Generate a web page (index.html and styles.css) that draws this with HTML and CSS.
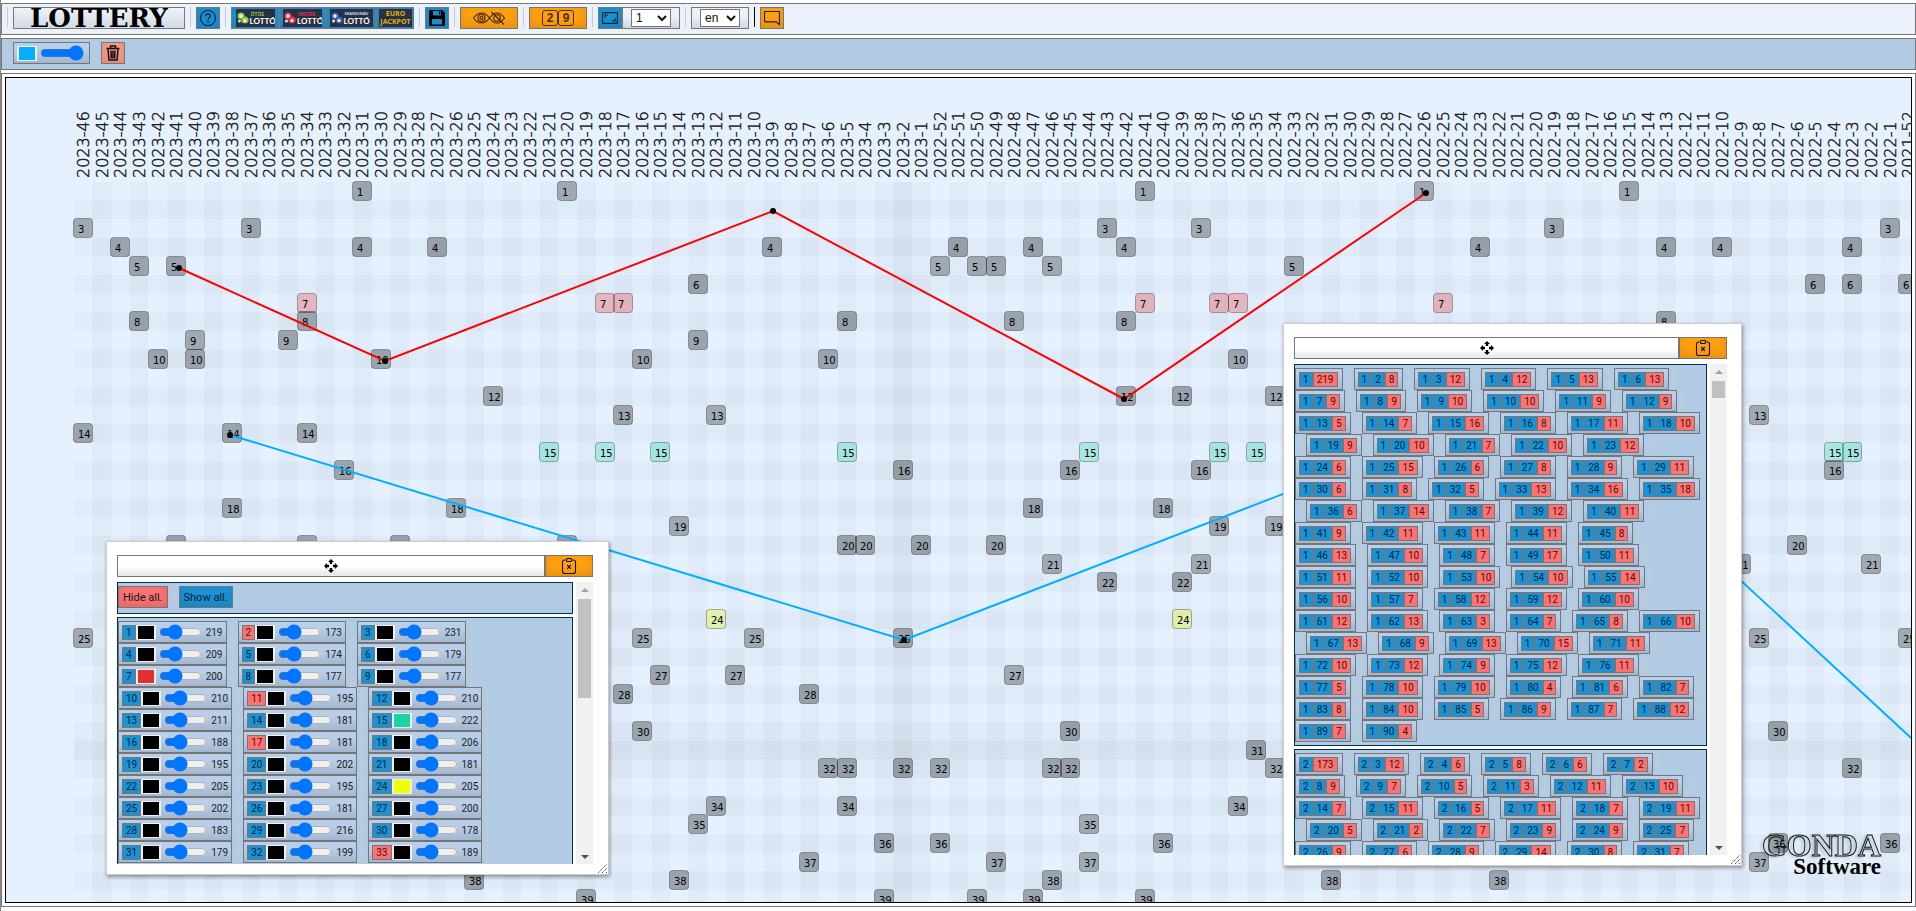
FILE: index.html
```html
<!DOCTYPE html>
<html lang="en">
<head>
<meta charset="utf-8">
<title>Lottery</title>
<link rel="stylesheet" href="styles.css">
</head>
<body>
<svg class="defs" aria-hidden="true">
  <symbol id="move" viewBox="0 0 14 14">
    <path d="M7 0 10 3H8.200V5H5.800V3H4zM7 14 4 11h1.800V9h2.400v2H10zM0 7l3-3v1.800H5v2.400H3V10zM14 7l-3 3V8.200H9V5.800h2V4z"/>
  </symbol>
  <symbol id="clip" viewBox="0 0 16 16">
    <path d="M4.500 2H3.500a2 2 0 0 0-2 2v9.500a2 2 0 0 0 2 2h9a2 2 0 0 0 2-2V4a2 2 0 0 0-2-2h-1M6.500.5h3a1 1 0 0 1 1 1v1a1 1 0 0 1-1 1h-3a1 1 0 0 1-1-1v-1a1 1 0 0 1 1-1zM6.200 7l3.600 3.800M9.800 7l-3.600 3.800" fill="none" stroke="#111" stroke-width="1.100"/>
  </symbol>
  <symbol id="balls" viewBox="0 0 12 12">
    <circle cx="4" cy="4" r="3.600"/><circle cx="8" cy="8" r="3.600"/>
    <circle cx="4" cy="4" r="1.700" fill="#fff"/><circle cx="8" cy="8.500" r="1.500" fill="#fff"/><circle cx="2.500" cy="9" r="1.500" fill="#e8e8c0"/>
  </symbol>
  <symbol id="grip" viewBox="0 0 9 9">
    <path d="M0 9 9 0M4 9l5-5M8 9l1-1" stroke="#555" stroke-width="1" stroke-dasharray="1.500 .6"/>
  </symbol>
</svg>

<header class="bar bar-main">
  <i class="sep"></i>
  <h1 class="logo">LOTTERY</h1>
  <i class="sep"></i>
  <button class="btn blue" aria-label="Help">
    <svg width="18" height="18" viewBox="0 0 18 18"><circle cx="9" cy="9" r="7.500" fill="none" stroke="#06263a" stroke-width="1.200"/><path d="M6.700 7.200C6.700 5.600 7.700 4.900 9 4.900s2.300.8 2.300 2c0 1.600-2.200 1.700-2.200 3.600" fill="none" stroke="#06263a" stroke-width="1.300"/><circle cx="9.100" cy="12.600" r=".9" fill="#06263a"/></svg>
  </button>
  <i class="sep"></i>
  <div class="group">
    <button class="btn blue game"><span class="card"><svg class="green" width="12" height="12"><use href="#balls"/></svg><span class="name"><small class="green">ÖTÖS</small><b>LOTTÓ</b></span></span></button>
    <button class="btn blue game"><span class="card"><svg class="red" width="12" height="12"><use href="#balls"/></svg><span class="name"><small class="red">HATOS</small><b>LOTTÓ</b></span></span></button>
    <button class="btn blue game"><span class="card card-wide"><svg class="navy" width="12" height="12"><use href="#balls"/></svg><span class="name"><small class="sky">SKANDINÁV</small><b>LOTTÓ</b></span></span></button>
    <button class="btn blue game"><span class="card card-slim"><span class="name gold"><em>EURO</em><em>JACKPOT</em></span></span></button>
  </div>
  <i class="sep"></i>
  <button class="btn blue" aria-label="Save">
    <svg width="16" height="16" viewBox="0 0 16 16"><path d="M1.500 0H13l3 2.500V14.500a1.500 1.500 0 0 1-1.500 1.500h-13A1.500 1.500 0 0 1 0 14.500v-13A1.500 1.500 0 0 1 1.500 0z"/><path d="M4 1h8v4.500H4zM3 9h10v5.500H3z" fill="#198ccb"/><path d="M10 1.500h1.300V4.500H10z"/></svg>
  </button>
  <i class="sep"></i>
  <button class="btn orange wide" aria-label="Toggle visibility">
    <svg width="32" height="14" viewBox="0 0 32 14" fill="none" stroke="#3a2500" stroke-width="1.100"><path d="M.5 7C3 3.500 5.500 2 8.500 2S14 3.500 16.500 7C14 10.500 11.500 12 8.500 12S3 10.500.5 7z"/><circle cx="8.500" cy="7" r="3.500"/><circle cx="8.500" cy="7" r="1.500"/><path d="M16.500 7C19 3.500 21 2 24 2s5 1.500 7.500 5C29 10.500 27 12 24 12s-5-1.500-7.500-5z"/><circle cx="24" cy="7" r="3.200"/><path d="M18.500 1 31 13.500"/></svg>
  </button>
  <i class="sep"></i>
  <button class="btn orange wide"><span class="digit">2</span><span class="digit">9</span></button>
  <i class="sep"></i>
  <div class="group">
    <button class="btn blue" aria-label="Zoom">
      <svg width="16" height="12" viewBox="0 0 16 12" fill="none" stroke="#04202f" stroke-width="1.100"><rect x=".6" y=".6" width="14.800" height="10.800" rx="1"/><path d="M3 5.500V3h3M13 6.500V9h-3"/></svg>
    </button>
    <span class="field"><select aria-label="Zoom level"><option>1</option></select></span>
  </div>
  <i class="sep"></i>
  <span class="field"><select aria-label="Language"><option>en</option></select></span>
  <i class="sep dark"></i>
  <button class="btn orange" aria-label="Comment">
    <svg width="16" height="16" viewBox="0 0 16 16" fill="none" stroke="#222" stroke-width="1.200"><path d="M1.500 1.500h13a1 1 0 0 1 1 1V14.500L12 11.800H1.500a1 1 0 0 1-1-1V2.500a1 1 0 0 1 1-1z"/></svg>
  </button>
</header>

<div class="bar bar-tools">
  <i class="sep"></i>
  <span class="item pen"><input type="color" value="#00b0ff" aria-label="Line colour"><input type="range" value="100" aria-label="Line opacity"></span>
  <i class="sep"></i>
  <button class="btn salmon" aria-label="Delete">
    <svg width="14" height="16" viewBox="0 0 14 16" fill="none" stroke="#111" stroke-width="1.500"><path d="M.5 3.500h13M4.500 3V1h5v2M2 4l1 11h8l1-11M5 5.500l.4 8M7 5.500v8M9 5.500l-.4 8"/></svg>
  </button>
</div>

<main class="stage">
  <div class="board">
    <svg id="chart" class="chart" role="img" aria-label="Drawn numbers by week"></svg>

    <section class="window window-numbers">
      <div class="titlebar"><button class="drag" aria-label="Move"><svg width="14" height="14"><use href="#move"/></svg></button><button class="btn orange close" aria-label="Close"><svg width="16" height="16"><use href="#clip"/></svg></button></div>
      <div class="body">
        <div class="content">
          <div class="box box-actions"><button class="btn coral text">Hide all.</button><i class="sep"></i><button class="btn blue text">Show all.</button></div>
          <div class="box" id="numbers"></div>
        </div>
        <div class="scroll"><i class="up"></i><i class="thumb thumb-long"></i><i class="down"></i></div>
      </div>
      <svg class="grip" width="9" height="9"><use href="#grip"/></svg>
    </section>

    <section class="window window-pairs">
      <div class="titlebar"><button class="drag" aria-label="Move"><svg width="14" height="14"><use href="#move"/></svg></button><button class="btn orange close" aria-label="Close"><svg width="16" height="16"><use href="#clip"/></svg></button></div>
      <div class="body">
        <div class="content" id="pairs"></div>
        <div class="scroll"><i class="up"></i><i class="thumb"></i><i class="down"></i></div>
      </div>
      <svg class="grip" width="9" height="9"><use href="#grip"/></svg>
    </section>

    <div class="brand"><span class="brand-top">GONDA</span><span class="brand-bottom">Software</span></div>
  </div>
</main>
<script src="app.js"></script>
</body>
</html>
```
FILE: styles.css
```css
* { box-sizing: border-box; }
body {
  margin: 0;
  height: 100vh;
  padding: 3px 0 4px;
  display: flex;
  flex-direction: column;
  gap: 3px;
  background: #fff;
  border-left: 1px solid #888;
  font-family: Roboto, "Liberation Sans", sans-serif;
  font-size: 10px;
  overflow: hidden;
}
.defs { position: absolute; width: 0; height: 0; }
button { font: inherit; margin: 0; padding: 0; cursor: pointer; }

.bar {
  display: flex;
  align-items: flex-start;
  height: 32px;
  flex: none;
  padding: 3px 0 5px;
  border: 1px solid #767676;
  background: #ebf1fa;
}
.bar-tools { background: #b1cbe5; }
.sep { flex: none; width: 1px; height: 20px; margin: 0 5px; background: #c8cacc; }
.sep.dark { background: #000; }
.group { display: flex; }

.btn {
  display: inline-flex;
  align-items: center;
  justify-content: center;
  flex: none;
  width: 24px;
  height: 22px;
  border: 1px solid #767676;
  box-shadow: inset 0 -4px 8px rgba(0, 0, 0, .1);
  color: #0a1c2a;
}
.blue { background: #1a92d4; }
.orange { background: #ffa010; }
.salmon { background: #fa9a84; }
.coral { background: #ff7272; }
.wide { width: 58px; }
.text { width: auto; padding: 0 4px; font-size: 11px; }

.logo {
  margin: 0;
  width: 172px;
  height: 22px;
  border: 1px solid #767676;
  background: linear-gradient(#eef3fb, #d5dae2);
  color: #000;
  font: bold 26px/20px "DejaVu Serif", serif;
  text-align: center;
}
.game { width: 48px; }
.game + .game { width: 47px; }
.game:nth-child(3) { width: 50px; }
.game:nth-child(4) { width: 38px; }
.card {
  display: flex;
  align-items: center;
  gap: 1px;
  width: 39px;
  height: 18px;
  overflow: hidden;
  background: #2a3044;
  padding-left: 1px;
}
.card-wide { width: 43px; }
.card-slim { width: 33px; justify-content: center; }
.card svg { flex: none; fill: currentColor; }
.name { display: flex; flex-direction: column; text-align: left; color: #fff; }
.card svg.green, small.green { color: #8fc640; background: none; }
.card svg.red, small.red { color: #ee3050; }
.card svg.navy { color: #3c64b8; }
small.sky { color: #c8d8f0; }
.name small { font: bold 5px/6px "Open Sans", sans-serif; padding-left: 1px; }
.card-wide small { font-size: 4px; }
.name b { font: bold 8px/8px Lato, sans-serif; }
.name.gold { color: #e0b400; align-items: center; }
.name em { font: bold 7px/8px "Open Sans", sans-serif; }

.digit {
  width: 16px;
  height: 16px;
  border: 1px solid #4a3000;
  border-radius: 3px;
  font: bold 12px/14px "Liberation Sans", sans-serif;
  color: #4a3000;
}
.field {
  display: flex;
  justify-content: center;
  width: 58px;
  height: 22px;
  padding-top: 1px;
  border: 1px solid #767676;
  background: linear-gradient(#ebf1fa 40%, #cfd4dd);
}
select {
  width: 40px;
  height: 18px;
  padding: 0;
  border: 1px solid #767676;
  border-radius: 0;
  background: #fff;
  color: #111;
  font: 12px "Liberation Sans", sans-serif;
}

.item {
  display: flex;
  align-items: center;
  flex: none;
  height: 22px;
  padding: 0 3px;
  border: 1px solid #767676;
  background: linear-gradient(#b9cee8 30%, #a3b7d0);
}
input[type="color"] {
  appearance: none;
  flex: none;
  width: 20px;
  height: 15px;
  padding: 0;
  border: solid #efefef;
  border-width: 1px 2px;
  background: #efefef;
}
input[type="color"]::-webkit-color-swatch-wrapper { padding: 0; }
input[type="color"]::-webkit-color-swatch { border: 0; border-radius: 0; }
input[type="range"] { flex: none; width: 43px; height: 16px; margin: 0 4px 0 3px; }
.pen input[type="range"] { width: 44px; margin: 0 2px 0 3px; }

.stage {
  flex: 1;
  min-height: 0;
  padding: 3px;
  border: 1px solid #767676;
}
.board {
  position: relative;
  height: 100%;
  border: 1px solid #000;
  background: #e5f1ff;
  overflow: hidden;
}
.chart { display: block; width: 100%; height: 100%; }
.chart text { font-family: "DejaVu Sans", sans-serif; }
.week { font-size: 16px; font-weight: 200; fill: #111; stroke: #111; stroke-width: .4; }
.num { font-size: 10px; fill: #000; }
.stripe { fill: #000; opacity: .025; }
.cursor { fill: #000; opacity: .05; }
.cell { fill: #000; fill-opacity: .3; stroke: #000; stroke-opacity: .3; }
.cell.c7 { fill: #e53030; }
.cell.c15 { fill: #1cd3a2; }
.cell.c24 { fill: #eeff00; }
.path { fill: none; stroke-width: 2; }

.window {
  position: absolute;
  display: flex;
  flex-direction: column;
  gap: 5px;
  padding: 13px 15px 10px 10px;
  border: 1px solid #ccc;
  background: #fff;
  box-shadow: 1px 2px 4px rgba(0, 0, 0, .4);
}
.window-numbers { left: 100px; top: 463px; width: 503px; height: 334px; }
.window-pairs { left: 1277px; top: 245px; width: 459px; height: 543px; padding-right: 14px; }
.titlebar { display: flex; height: 22px; flex: none; }
.drag {
  display: flex;
  align-items: center;
  justify-content: center;
  flex: 1;
  border: 1px solid #767676;
  background: linear-gradient(#fff 50%, #e8e8e8);
}
.close { width: 48px; }
.body { display: flex; flex: 1; min-height: 0; gap: 3px; }
.content { flex: 1; min-width: 0; display: flex; flex-direction: column; gap: 3px; overflow: hidden; }
.box { flex: none; padding: 3px 0; border: 1px solid #003350; background: #b1cbe5; }
.box-actions { display: flex; padding: 3px 0 5px; }
.line { display: flex; }
.tag {
  height: 15px;
  padding: 0 3px;
  border: 1px solid #767676;
  font-size: 10px;
  line-height: 13px;
  color: #06263a;
}
.tag.coral { color: #4a1010; }
.value { color: #222; }
.pair { padding-right: 4px; }

.scroll { display: flex; flex-direction: column; align-items: center; width: 17px; background: #f1f1f1; }
.up, .down { border: 4px solid transparent; margin: 2px 0 7px; }
.up { border-bottom-color: #a3a3a3; }
.down { border-top-color: #505050; margin: auto 0 1px; }
.thumb { width: 13px; height: 17px; background: #c1c1c1; }
.thumb-long { height: 99px; }
.grip { position: absolute; right: 1px; bottom: 1px; }

.brand {
  position: absolute;
  right: 30px;
  bottom: 26px;
  display: flex;
  flex-direction: column;
  align-items: flex-end;
  font-family: "Liberation Serif", serif;
  font-weight: bold;
  color: #000;
}
.brand-top {
  font-size: 32px;
  line-height: 26px;
  color: transparent;
  -webkit-text-stroke: 1px #111;
  filter: drop-shadow(-2px 1px 1px rgba(0, 0, 0, .25));
}
.brand-bottom { font-size: 23px; line-height: 18px; }
```
FILE: app.js
```js
const NS = "http://www.w3.org/2000/svg";
const chart = document.getElementById("chart");
const PITCH = 18.625, X0 = 68, Y0 = 104;

function add(tag, attrs, text) {
  const el = document.createElementNS(NS, tag);
  for (const k in attrs) el.setAttribute(k, attrs[k]);
  if (text !== undefined) el.textContent = text;
  chart.appendChild(el);
}

const weeks = [];
for (let w = 46; w > 0; w--) weeks.push("2023-" + w);
for (let w = 52; w > 0; w--) weeks.push("2022-" + w);
weeks.push("2021-52");

const COLS = weeks.length, ROWS = 39;
for (let c = 1; c < COLS; c += 2)
  add("rect", { class: "stripe", x: X0 + c * PITCH, y: Y0, width: PITCH, height: ROWS * PITCH });
for (let r = 1; r < ROWS; r += 2)
  add("rect", { class: "stripe", x: X0, y: Y0 + r * PITCH, width: COLS * PITCH, height: PITCH });
add("rect", { class: "cursor", x: X0 + 44 * PITCH, y: Y0, width: PITCH, height: ROWS * PITCH });
add("rect", { class: "cursor", x: X0, y: Y0 + 30 * PITCH, width: COLS * PITCH, height: PITCH });

weeks.forEach((w, c) => {
  const x = Math.round(X0 + c * PITCH + 15);
  add("text", { class: "week", transform: `translate(${x} 100) rotate(-90)` }, w);
});

const draws = {
  1: [15, 26, 57, 72, 83],
  3: [0, 9, 55, 60, 79, 97],
  4: [2, 15, 19, 37, 47, 51, 56, 75, 85, 88, 95],
  5: [3, 5, 46, 48, 49, 52, 65],
  6: [33, 93, 95, 98],
  7: [12, 28, 29, 57, 61, 62, 73],
  8: [3, 12, 41, 50, 56, 85],
  9: [6, 11, 33],
  10: [4, 6, 16, 30, 40, 62],
  12: [22, 56, 59, 64],
  13: [29, 34, 90],
  14: [0, 8, 12],
  15: [25, 28, 31, 41, 54, 61, 63, 94, 95],
  16: [14, 44, 53, 60, 94],
  18: [8, 20, 51, 58],
  19: [32, 61, 64],
  20: [5, 12, 17, 26, 41, 42, 45, 49, 92],
  21: [52, 60, 89, 96],
  22: [55, 59],
  24: [34, 59],
  25: [0, 30, 36, 44, 90, 98],
  27: [31, 35, 50],
  28: [29, 39],
  30: [30, 53, 91],
  31: [63],
  32: [40, 41, 44, 46, 52, 53, 64, 95],
  34: [34, 41, 62],
  35: [33, 54],
  36: [43, 46, 58, 91, 97],
  37: [39, 49, 54, 90],
  38: [21, 32, 52, 67, 76],
  39: [27, 43, 48, 51, 57]
};
for (const n in draws) {
  for (const c of draws[n]) {
    const x = Math.round(X0 + c * PITCH), y = Math.round(Y0 + (n - 1) * PITCH);
    add("rect", { class: "cell c" + n, x: x - 0.5, y: y - 0.5, width: 19, height: 19, rx: 3 });
    add("text", { class: "num", x: x + 4, y: y + 14 }, n);
  }
}

function route(points, color, dots) {
  add("polyline", { class: "path", points: points.join(" "), stroke: color });
  points.slice(0, dots).forEach(([x, y]) => add("circle", { cx: x, cy: y, r: 3 }));
}
route([[173, 190], [379, 283], [767, 133], [1118, 321], [1420, 115]], "#f00", 5);
route([[224, 357], [898, 562], [1534, 317], [1994, 742]], "#00b0ff", 3);

const SEP = '<i class="sep"></i>';
const swatch = { 7: "#e53030", 15: "#1cd3a2", 24: "#f0ff00" };
const off = [2, 11, 17, 33];
const counts = [219, 173, 231, 209, 174, 179, 200, 177, 177, 210, 195, 210, 211, 181, 222, 188, 181, 206,
  195, 202, 181, 205, 195, 205, 202, 181, 200, 183, 216, 178, 179, 199, 189];
let html = "";
for (let i = 0; i < counts.length; i += 3) {
  html += '<div class="line">';
  for (let n = i + 1; n <= i + 3; n++) {
    html += `<span class="item"><button class="tag ${off.includes(n) ? "coral" : "blue"}">${n}</button>` +
      `<input type="color" value="${swatch[n] || "#000000"}" aria-label="Colour of ${n}">` +
      `<input type="range" value="30" aria-label="Opacity of ${n}"><span class="value">${counts[n - 1]}</span></span>` + SEP;
  }
  html += "</div>";
}
document.getElementById("numbers").innerHTML = html;

/* Each string is one line of "number:count" pairs; a leading "|" carries the divider over from the line above. */
const pairs = {
  1: ["219 2:8 3:12 4:12 5:13 6:13", "7:9 8:9 9:10 10:10 11:9 12:9", "13:5 14:7 15:16 16:8 17:11 18:10",
    "|19:9 20:10 21:7 22:10 23:12", "24:6 25:15 26:6 27:8 28:9 29:11", "30:6 31:8 32:5 33:13 34:16 35:18",
    "|36:6 37:14 38:7 39:12 40:11", "41:9 42:11 43:11 44:11 45:8", "46:13 47:10 48:7 49:17 50:11",
    "51:11 52:10 53:10 54:10 55:14", "56:10 57:7 58:12 59:12 60:10", "61:12 62:13 63:3 64:7 65:8 66:10",
    "|67:13 68:9 69:13 70:15 71:11", "72:10 73:12 74:9 75:12 76:11", "77:5 78:10 79:10 80:4 81:6 82:7",
    "83:8 84:10 85:5 86:9 87:7 88:12", "89:7 90:4"],
  2: ["173 3:12 4:6 5:8 6:6 7:2", "8:9 9:7 10:5 11:3 12:11 13:10", "14:7 15:11 16:5 17:11 18:7 19:11",
    "|20:5 21:2 22:7 23:9 24:9 25:7", "26:9 27:6 28:9 29:14 30:8 31:7"]
};
document.getElementById("pairs").innerHTML = Object.keys(pairs).map((a) => {
  const lines = pairs[a].map((line, i) => {
    const next = pairs[a][i + 1] || "";
    const items = line.replace("|", "").split(" ").map((p) => {
      const parts = p.split(":");
      const count = parts.pop();
      const tags = [a, ...parts].map((t) => `<button class="tag blue">${t}</button>`).join("");
      return `<span class="item pair">${tags}<button class="tag coral">${count}</button></span>`;
    }).join(SEP);
    return `<div class="line">${line[0] === "|" ? SEP : ""}${items}${next[0] === "|" ? "" : SEP}</div>`;
  });
  return `<div class="box">${lines.join("")}</div>`;
}).join("");
```
